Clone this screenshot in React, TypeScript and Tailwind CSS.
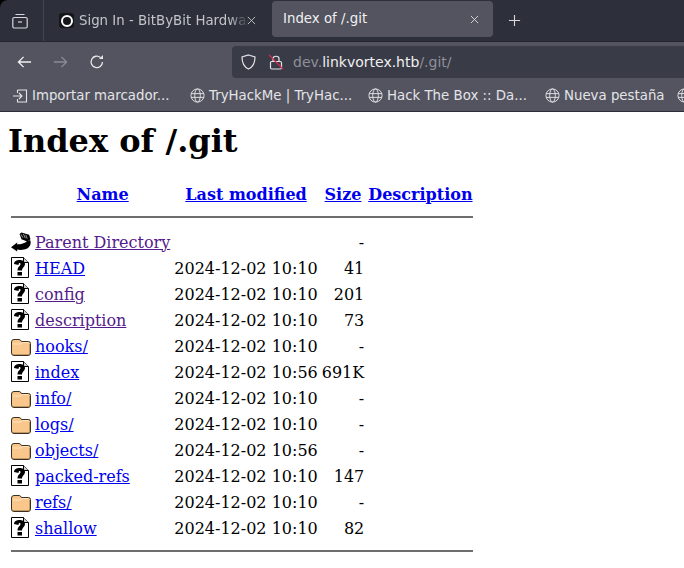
const sans = "font-['DejaVu_Sans',sans-serif]";

function BackIcon() {
  return (
    <svg width="20" height="22" viewBox="0 0 21 22" fill="none" className="block">
      <path d="M0 16.5 L6.5 11.5 L6.5 13.5 C10 13.5 15 12.5 17 10 L20 9 C21.5 12 20.5 15.5 17.5 17.5 C14 19.5 10 19.5 6.5 19 L6.5 21 Z" fill="#000" />
      <path d="M9 2.5 L11 1 L19 3.5 L20.5 8 L17 10.5 L11 8 Z" fill="#000" />
      <path d="M10.5 3 L12.5 6.5 M13 2.5 L15 7 M15.5 3.5 L17 7.5" stroke="#a0a0a0" strokeWidth="1" />
    </svg>
  );
}

function UnknownIcon() {
  return (
    <svg width="20" height="22" viewBox="0 0 20 22" fill="none" className="block">
      <path d="M0.5 0.5 H12.5 L17.5 5.5 V20.5 H0.5 Z" fill="#fff" stroke="#000" />
      <path d="M12.5 0.5 V5.5 H17.5" fill="#cfcfcf" stroke="#000" />
      <path d="M3 7 C3 1.5 14 1.5 14 7 C14 10 11 10.5 11 13.5 H6.5 C6.5 9.5 9.5 9 9.5 7 C9.5 5.5 7.5 5.5 7.5 8 Z" fill="#000" />
      <rect x="6.5" y="15" width="4.5" height="3.5" fill="#000" />
    </svg>
  );
}

function FolderIcon() {
  return (
    <svg width="20" height="22" viewBox="0 0 20 22" fill="none" className="block">
      <path d="M0.5 7 Q0.5 4.5 3 4.5 H8 Q9.5 4.5 10.5 6.5 H17.5 Q19.5 6.5 19.5 8.5 V18 Q19.5 20.5 17 20.5 H3 Q0.5 20.5 0.5 18 Z" fill="#f9c68c" stroke="#3b3020" />
      <path d="M2 9 H10 L11.5 7.5 H17" stroke="#ffe6c4" />
      <path d="M2.5 19.5 H18.5 V9" stroke="#8a6a3f" strokeDasharray="1 1" />
    </svg>
  );
}

function Globe() {
  return (
    <svg width="15" height="15" viewBox="0 0 16 16" fill="none" stroke="#e4e4e8" strokeWidth="1" className="shrink-0">
      <circle cx="8" cy="8" r="7" />
      <ellipse cx="8" cy="8" rx="3" ry="7" />
      <path d="M1.2 6H14.8M1.2 10H14.8" />
    </svg>
  );
}

const rows = [
  { icon: "back", name: "Parent Directory", date: "", size: "-", visited: true },
  { icon: "file", name: "HEAD", date: "2024-12-02 10:10", size: "41", visited: false },
  { icon: "file", name: "config", date: "2024-12-02 10:10", size: "201", visited: true },
  { icon: "file", name: "description", date: "2024-12-02 10:10", size: "73", visited: true },
  { icon: "dir", name: "hooks/", date: "2024-12-02 10:10", size: "-", visited: false },
  { icon: "file", name: "index", date: "2024-12-02 10:56", size: "691K", visited: false },
  { icon: "dir", name: "info/", date: "2024-12-02 10:10", size: "-", visited: false },
  { icon: "dir", name: "logs/", date: "2024-12-02 10:10", size: "-", visited: false },
  { icon: "dir", name: "objects/", date: "2024-12-02 10:56", size: "-", visited: false },
  { icon: "file", name: "packed-refs", date: "2024-12-02 10:10", size: "147", visited: false },
  { icon: "dir", name: "refs/", date: "2024-12-02 10:10", size: "-", visited: false },
  { icon: "file", name: "shallow", date: "2024-12-02 10:10", size: "82", visited: false },
];

function Browser() {
  return (
    <div className={`${sans} bg-black text-[#dcdce0]`}>
      {/* Tabs */}
      <div className="flex h-[42px] items-center rounded-tl-[8px] border-b border-[#23252d] bg-[#2d303b]">
        <div className="flex h-full w-[44px] shrink-0 items-center justify-center border-r border-[#44464f] pr-[4px]">
          <svg width="16" height="16" viewBox="0 0 16 16" fill="none" stroke="#d8d8dc" strokeWidth="1.2">
            <path d="M3.5 1.5H12.5M2 4.5H14" />
            <rect x="0.8" y="4.5" width="14.4" height="10.5" rx="1.5" />
            <path d="M6 9H10" />
          </svg>
        </div>
        <div className="flex h-full w-[228px] shrink-0 items-center pl-[15px]">
          <div className="flex h-[15px] w-[15px] shrink-0 items-center justify-center rounded-[3px] bg-[#14161a]">
            <div className="h-3 w-3 rounded-full border-2 border-white" />
          </div>
          <span className="ml-[5px] w-[170px] overflow-hidden whitespace-nowrap text-[13.33px] text-[#c3c4ca] [mask-image:linear-gradient(to_right,black_88%,transparent)]">
            Sign In - BitByBit Hardware
          </span>
          <svg width="9" height="9" viewBox="0 0 10 10" stroke="#c8c8cc" className="ml-[-2px] shrink-0">
            <path d="M1 1L9 9M9 1L1 9" />
          </svg>
        </div>
        <div className="mb-[3px] flex h-[36px] w-[221px] shrink-0 items-center justify-between rounded-[4px] bg-[#53545f] pl-[11px] pr-[14px] text-[13.33px] text-[#f0f0f2]">
          <span>Index of /.git</span>
          <svg width="9" height="9" viewBox="0 0 10 10" stroke="#e0e0e4">
            <path d="M1 1L9 9M9 1L1 9" />
          </svg>
        </div>
        <svg width="13" height="13" viewBox="0 0 14 14" stroke="#d8d8dc" className="ml-[15px]">
          <path d="M7 1V13M1 7H13" strokeWidth="1.2" />
        </svg>
      </div>

      {/* Nav bar */}
      <div className="flex h-[36px] items-center bg-[#53545f] pt-[4px]">
        <svg width="15" height="14" viewBox="0 0 16 14" fill="none" stroke="#f0f0f2" strokeWidth="1.4" className="ml-[17px]">
          <path d="M15 7H1.5M7 1.5L1.5 7L7 12.5" />
        </svg>
        <svg width="15" height="14" viewBox="0 0 16 14" fill="none" stroke="#8b8c95" strokeWidth="1.4" className="ml-[21px]">
          <path d="M1 7H14.5M9 1.5L14.5 7L9 12.5" />
        </svg>
        <svg width="16" height="16" viewBox="0 0 16 16" fill="none" stroke="#e8e8ea" strokeWidth="1.3" className="ml-[21px]">
          <path d="M13.5 8A5.7 5.7 0 1 1 11.5 3.5" />
          <path d="M10 5H14V1Z" fill="#e8e8ea" stroke="none" />
        </svg>
        <div className="ml-[127px] flex h-[32px] flex-1 items-center rounded-l-[4px] bg-[#393b46] pl-[9px] text-[14px]">
          <svg width="15" height="16" viewBox="0 0 15 16" fill="none" stroke="#e4e4e8" strokeWidth="1.2">
            <path d="M7.5 1L14 3C14 9 12 13 7.5 15C3 13 1 9 1 3Z" />
          </svg>
          <svg width="14" height="16" viewBox="0 0 14 16" fill="none" className="ml-[13px]">
            <path d="M4 7V4.5C4 1.5 10 1.5 10 4.5V7" stroke="#e4e4e8" strokeWidth="1.2" />
            <rect x="1.5" y="7.5" width="11" height="7.5" rx="1.2" stroke="#e4e4e8" strokeWidth="1.2" />
            <path d="M0 1L14 15" stroke="#e22850" strokeWidth="1.2" />
          </svg>
          <span className="ml-[10px] text-[#8f909a]">
            dev.<span className="text-[#f0f0f2]">linkvortex.htb</span>/.git/
          </span>
        </div>
      </div>

      {/* Bookmarks */}
      <div className="flex h-[34px] items-center overflow-hidden whitespace-nowrap border-b border-[#2b2e3a] bg-[#53545f] pl-[13px] pt-[2px] text-[13.33px] text-[#e4e4e8]">
        <svg width="15" height="14" viewBox="0 0 15 14" fill="none" stroke="#e4e4e8" strokeWidth="1.1" className="shrink-0">
          <path d="M4.5 1H13.5V13H4.5V10M4.5 4V1M0 7H9M6 4L9 7L6 10" />
        </svg>
        <span className="ml-[4px] w-[158px] shrink-0">Importar marcador...</span>
        <Globe />
        <span className="ml-[4px] w-[159px] shrink-0">TryHackMe | TryHac...</span>
        <Globe />
        <span className="ml-[4px] w-[158px] shrink-0">Hack The Box :: Da...</span>
        <Globe />
        <span className="ml-[4px] w-[113px] shrink-0">Nueva pestaña</span>
        <Globe />
      </div>
    </div>
  );
}

export default function App() {
  return (
    <div className="h-[568px] w-[684px] overflow-hidden bg-white text-black font-['DejaVu_Serif',serif]">
      <Browser />
      <div className="px-2">
        <h1 className="mt-[10px] text-[32px] font-bold leading-[38px]">Index of /.git</h1>
        <table className="mt-[22px] border-separate border-spacing-[2px] whitespace-nowrap text-[16px] leading-[19px]">
          <thead>
            <tr>
              <th className="p-[1px]" />
              <th className="p-[1px] font-bold text-[#0000ee] underline">Name</th>
              <th className="p-[1px] font-bold text-[#0000ee] underline">Last modified</th>
              <th className="p-[1px] font-bold text-[#0000ee] underline">Size</th>
              <th className="p-[1px] font-bold text-[#0000ee] underline">Description</th>
            </tr>
            <tr>
              <th colSpan={5} className="p-[1px]">
                <hr className="mb-[9px] mt-[8px] border-t-2 border-[#6e6e6e]" />
              </th>
            </tr>
          </thead>
          <tbody>
            {rows.map((r) => (
              <tr key={r.name}>
                <td className="p-[1px]">
                  {r.icon === "back" && <BackIcon />}
                  {r.icon === "file" && <UnknownIcon />}
                  {r.icon === "dir" && <FolderIcon />}
                </td>
                <td className={r.visited ? "p-[1px] text-[#551a8b] underline" : "p-[1px] text-[#0000ee] underline"}>{r.name}</td>
                <td className="p-[1px] text-right">{r.date}</td>
                <td className="p-[1px] text-right">{r.size}</td>
                <td className="p-[1px]" />
              </tr>
            ))}
            <tr>
              <th colSpan={5} className="p-[1px]">
                <hr className="mb-[8px] mt-[7px] border-t-2 border-[#6e6e6e]" />
              </th>
            </tr>
          </tbody>
        </table>
      </div>
    </div>
  );
}
